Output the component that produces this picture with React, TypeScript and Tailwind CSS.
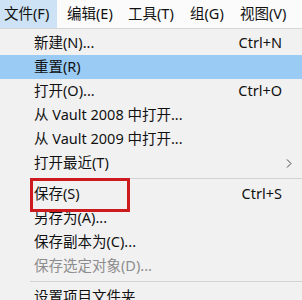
import React from "react";

type Item =
  | { kind: "item"; label: string; shortcut?: string; active?: boolean; disabled?: boolean; sub?: boolean }
  | { kind: "sep" };

const items: Item[] = [
  { kind: "item", label: "新建(N)...", shortcut: "Ctrl+N" },
  { kind: "item", label: "重置(R)", active: true },
  { kind: "item", label: "打开(O)...", shortcut: "Ctrl+O" },
  { kind: "item", label: "从 Vault 2008 中打开..." },
  { kind: "item", label: "从 Vault 2009 中打开..." },
  { kind: "item", label: "打开最近(T)", sub: true },
  { kind: "sep" },
  { kind: "item", label: "保存(S)", shortcut: "Ctrl+S" },
  { kind: "item", label: "另存为(A)..." },
  { kind: "item", label: "保存副本为(C)..." },
  { kind: "item", label: "保存选定对象(D)...", disabled: true },
  { kind: "sep" },
  { kind: "item", label: "设置项目文件夹..." },
];

export default function App() {
  return (
    <div
      className="relative w-[302px] h-[300px] overflow-hidden bg-[#f2f1f2] text-[14.5px] text-[#111]"
      style={{ fontFamily: '"Noto Sans", "Noto Sans CJK SC", sans-serif' }}
    >
      <div className="flex h-[28px] items-center bg-[#fbfbfb] border-b border-[#d6d6d6] box-content whitespace-nowrap">
        <div className="h-full flex items-center pl-[4px] w-[57px] bg-[#cde3f5]">文件(F)</div>
        <div className="h-full flex items-center pl-[10px] w-[61px]">编辑(E)</div>
        <div className="h-full flex items-center pl-[10px] w-[62px]">工具(T)</div>
        <div className="h-full flex items-center pl-[10px] w-[50px]">组(G)</div>
        <div className="h-full flex items-center pl-[10px]">视图(V)</div>
      </div>
      <div className="pt-[2px]">
        {items.map((it, idx) =>
          it.kind === "sep" ? (
            <div key={idx} className="h-[7px] flex items-center pl-[30px]">
              <div className="h-px w-full bg-[#d2d2d2]" />
            </div>
          ) : (
            <div
              key={idx}
              className={
                "relative h-[24px] flex items-center pl-[34px] pr-[20px] whitespace-nowrap " +
                (it.active ? "bg-[#99cbf4]" : "") +
                (it.disabled ? " text-[#8d8d8d]" : "")
              }
            >
              <span className="flex-1">{it.label}</span>
              {it.shortcut && <span>{it.shortcut}</span>}
              {it.sub && (
                <svg className="absolute right-[10px] top-[8px]" width="6" height="9" viewBox="0 0 6 9">
                  <path d="M1 0.5 L5 4.5 L1 8.5" fill="none" stroke="#444" strokeWidth="1" />
                </svg>
              )}
            </div>
          )
        )}
      </div>
      <div className="absolute left-[30px] top-[178px] w-[100px] h-[34px] border-[3px] border-[#cc1a1f]" />
    </div>
  );
}
